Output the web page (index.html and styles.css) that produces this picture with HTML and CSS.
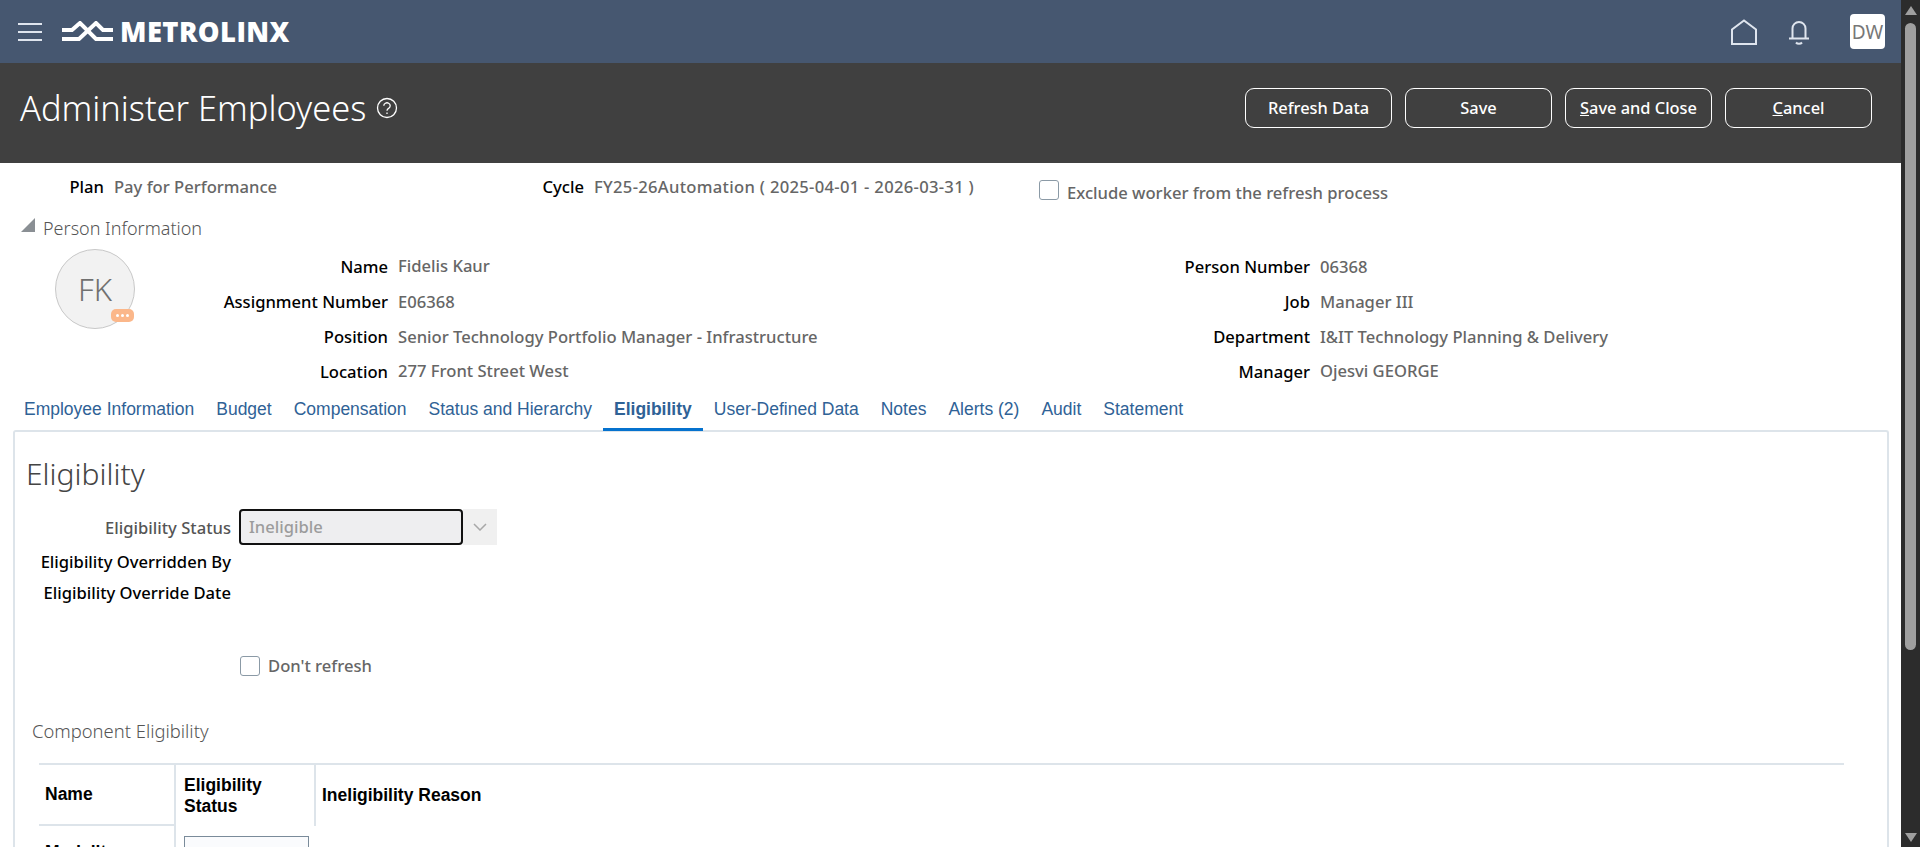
FILE: index.html
```html
<!DOCTYPE html>
<html lang="en">
<head>
	<meta charset="UTF-8">
	<title>Administer Employees</title>
	<link rel="stylesheet" href="styles.css">
</head>
<body>
<div class="app">
	<main class="page">
		<header class="topbar">
			<svg class="burger" width="24" height="18" viewBox="0 0 24 18"><path d="M0 1h24M0 9h24M0 17h24" stroke="#dfe5ee" stroke-width="2"/></svg>
			<svg class="mark" width="51" height="22" viewBox="0 0 51 22" fill="none" stroke="#fff" stroke-width="4"><path d="M0 9h10l8-7 16 16h17"/><path d="M51 9H41l-7-7-17 16H0"/></svg>
			<span class="brand">METROLINX</span>
			<div class="top-icons">
				<svg width="28" height="26" viewBox="0 0 28 26" fill="none" stroke="#dfe5ee" stroke-width="2"><path d="M2 25V10.500L14 1.500l12 9V25z"/></svg>
				<svg class="bell" width="22" height="26" viewBox="0 0 22 26" fill="none" stroke="#dfe5ee" stroke-width="2"><path d="M4.500 19V9.500a6.500 6.500 0 0 1 13 0V19M1 19.500h20"/><path d="M8 23.500a3.500 2.500 0 0 0 6 0"/></svg>
				<span class="user">DW</span>
			</div>
		</header>

		<section class="titlebar">
			<h1>Administer Employees</h1>
			<svg class="help" width="22" height="22" viewBox="0 0 22 22" fill="none" stroke="#fff" stroke-width="1.300"><circle cx="11" cy="11" r="9.500"/><path d="M7.800 8.800a3.200 3 0 1 1 4.800 2.600c-1 .6-1.600 1.100-1.600 2.400"/><path d="M11 15.500v1.500"/></svg>
			<div class="actions">
				<button type="button">Refresh Data</button>
				<button type="button">Save</button>
				<button type="button"><u>S</u>ave and Close</button>
				<button type="button"><u>C</u>ancel</button>
			</div>
		</section>

		<section class="plan">
			<span class="lbl">Plan</span><span class="val">Pay for Performance</span>
			<span class="lbl">Cycle</span><span class="val cycle">FY25-26Automation ( 2025-04-01 - 2026-03-31 )</span>
			<label class="check exclude"><i class="box"></i>Exclude worker from the refresh process</label>
		</section>

		<h2 class="person-head"><i class="tri"></i>Person Information</h2>

		<section class="person">
			<div class="avatar">FK<span class="badge"><b></b><b></b><b></b></span></div>
			<div class="facts">
				<span class="lbl">Name</span><span class="val up">Fidelis Kaur</span>
				<span class="lbl">Person Number</span><span class="val">06368</span>
				<span class="lbl">Assignment Number</span><span class="val">E06368</span>
				<span class="lbl">Job</span><span class="val">Manager III</span>
				<span class="lbl">Position</span><span class="val">Senior Technology Portfolio Manager - Infrastructure</span>
				<span class="lbl">Department</span><span class="val">I&amp;IT Technology Planning &amp; Delivery</span>
				<span class="lbl">Location</span><span class="val up">277 Front Street West</span>
				<span class="lbl">Manager</span><span class="val up">Ojesvi GEORGE</span>
			</div>
		</section>

		<nav class="tabs">
			<a>Employee Information</a>
			<a>Budget</a>
			<a>Compensation</a>
			<a>Status and Hierarchy</a>
			<a class="on">Eligibility</a>
			<a>User-Defined Data</a>
			<a>Notes</a>
			<a>Alerts (2)</a>
			<a>Audit</a>
			<a>Statement</a>
		</nav>

		<section class="panel">
			<h2 class="panel-title">Eligibility</h2>
			<div class="form">
				<span class="lbl soft">Eligibility Status</span>
				<div class="select"><span class="select-text">Ineligible</span><span class="select-btn"><svg width="14" height="8" viewBox="0 0 14 8" fill="none" stroke="#a8a8a8" stroke-width="1.500"><path d="M1 1l6 6 6-6"/></svg></span></div>
				<span class="lbl">Eligibility Overridden By</span><span></span>
				<span class="lbl">Eligibility Override Date</span><span></span>
			</div>
			<label class="check refresh"><i class="box"></i>Don't refresh</label>
			<h3 class="sub-title">Component Eligibility</h3>
			<div class="grid-table">
				<div class="th">Name</div>
				<div class="th second">Eligibility<br>Status</div>
				<div class="th last">Ineligibility Reason</div>
				<div class="td-name">Modality</div>
				<div class="td-status"><span class="input"></span></div>
			</div>
		</section>
	</main>

	<aside class="scrollbar">
		<i class="arrow"></i>
		<div class="track"><div class="thumb"></div></div>
		<i class="arrow down"></i>
	</aside>
</div>
</body>
</html>
```

FILE: styles.css
```css
*{
	box-sizing: border-box;
}
html, body{
	margin: 0;
	height: 100%;
	overflow: hidden;
	background: #fff;
}
body{
	font-family: "Noto Sans", "Open Sans", sans-serif;
	font-size: 16.600px;
	color: #000;
}
.app{
	display: flex;
	height: 847px;
}
.page{
	flex: 1;
	min-width: 0;
	overflow: hidden;
}

/* top bar */
.topbar{
	height: 63px;
	background: #465770;
	display: flex;
	align-items: center;
	padding-left: 18px;
}
.mark{
	margin-left: 20px;
}
.brand{
	margin-left: 7px;
	font-family: "Open Sans", sans-serif;
	font-weight: 800;
	font-size: 27.400px;
	line-height: 30px;
	letter-spacing: .4px;
	color: #fff;
}
.top-icons{
	margin-left: auto;
	margin-right: 16px;
	display: flex;
	align-items: center;
}
.bell{
	margin-left: 30px;
}
.user{
	margin-left: 40px;
	width: 35px;
	height: 35px;
	border-radius: 4px;
	background: #fff;
	color: #777;
	font-size: 19px;
	display: flex;
	align-items: center;
	justify-content: center;
}

/* title bar */
.titlebar{
	height: 100px;
	background: #404040;
	display: flex;
	align-items: flex-start;
	padding: 25px 29px 0 20px;
	color: #fff;
}
.titlebar h1{
	margin: 0;
	font-weight: 300;
	font-size: 34.400px;
	line-height: 40px;
}
.help{
	margin: 9px 0 0 10px;
}
.actions{
	margin-left: auto;
	display: flex;
	gap: 13px;
}
.actions button{
	width: 147px;
	height: 40px;
	background: transparent;
	border: 1px solid #fff;
	border-radius: 9px;
	color: #fff;
	font-family: inherit;
	font-size: 16.400px;
	font-weight: 500;
	padding: 0 0 2px;
}

/* plan line */
.lbl{
	color: #000;
	font-weight: 500;
	text-align: right;
	white-space: nowrap;
}
.val{
	color: #666;
	font-weight: 500;
	white-space: nowrap;
	padding-left: 10px;
}
.plan{
	height: 50px;
	display: grid;
	grid-template-columns: 104px 310px 170px 455px auto;
	align-items: baseline;
	padding-top: 11px;
}
.cycle{
	letter-spacing: .3px;
}
.check{
	display: flex;
	align-items: center;
	color: #666;
	font-weight: 500;
}
.box{
	width: 20px;
	height: 20px;
	border: 1px solid #8b9aa6;
	border-radius: 3px;
	background: #fff;
	margin-right: 8px;
}
.exclude{
	position: relative;
	top: 7px;
}
.exclude .box{
	margin-top: -6px;
}
.person-head{
	margin: 0;
	height: 28px;
	padding: 2px 0 0 21px;
	display: flex;
	align-items: center;
	font-weight: 300;
	font-size: 18px;
	color: #555;
}
.tri{
	width: 0;
	height: 0;
	border-left: 14px solid transparent;
	border-bottom: 14px solid #8a8f94;
	margin-right: 8px;
	margin-top: -6px;
}

/* person block */
.person{
	display: flex;
	height: 168px;
	padding: 8px 0 0 55px;
	position: relative;
}
.avatar{
	width: 80px;
	height: 80px;
	border: 1px solid #c8c8c8;
	border-radius: 50%;
	background: #f2f2f2;
	color: #707070;
	font-size: 31px;
	font-weight: 300;
	display: flex;
	align-items: center;
	justify-content: center;
	position: relative;
	flex: none;
}
.badge{
	position: absolute;
	left: 55px;
	top: 59px;
	width: 23px;
	height: 13px;
	border-radius: 5px;
	background: #fbb78a;
	display: flex;
	align-items: center;
	justify-content: center;
	gap: 2px;
}
.badge b{
	width: 3px;
	height: 3px;
	border-radius: 50%;
	background: #fff;
}
.facts{
	position: absolute;
	left: 0;
	top: 0;
	display: grid;
	grid-template-columns: 388px 569px 353px auto;
	grid-auto-rows: 35px;
	align-items: baseline;
	padding-top: 14px;
}
.facts .up{
	position: relative;
	top: -1px;
}

/* tabs */
.tabs{
	height: 42px;
	margin: -20px 0 0 13px;
	display: flex;
	font-family: "Liberation Sans", sans-serif;
	font-size: 17.500px;
	color: #2f6296;
}
.tabs a{
	padding: 0 11px;
	line-height: 40px;
	height: 42px;
	white-space: nowrap;
}
.tabs a.on{
	font-weight: bold;
	border-bottom: 3px solid #0572ce;
}

/* panel */
.panel{
	margin: -1px 12px 0 13px;
	height: 500px;
	border: 2px solid #dde4ea;
	border-bottom: 0;
	border-radius: 3px 3px 0 0;
	padding: 0 0 0 12px;
}
.panel-title{
	margin: 22px 0 0 -1px;
	font-weight: 300;
	font-size: 30px;
	line-height: 40px;
	color: #444;
}
.form{
	display: grid;
	grid-template-columns: 204px auto;
	justify-content: start;
	column-gap: 8px;
	margin-top: 15px;
	align-items: center;
}
.form .lbl{
	line-height: 31px;
}
.soft{
	color: #555;
}
.select{
	display: flex;
	width: 258px;
	height: 36px;
	margin-bottom: 1px;
}
.select-text{
	width: 224px;
	border: 2px solid #111;
	border-radius: 4px;
	background: #eeeef0;
	color: #9c9c9c;
	font-weight: 500;
	padding-left: 8px;
	line-height: 31px;
}
.select-btn{
	flex: 1;
	background: #f0f0f0;
	display: flex;
	align-items: center;
	justify-content: center;
}
.refresh{
	margin: 46px 0 0 213px;
}
.sub-title{
	margin: 41px 0 0 5px;
	font-weight: 300;
	font-size: 18.400px;
	line-height: 26px;
	color: #555;
}
.grid-table{
	display: grid;
	grid-template-columns: 137px 140px 1528px;
	grid-template-rows: 61px 40px;
	margin: 19px 0 0 12px;
	border-top: 2px solid #dde4ea;
	width: 1805px;
	font-family: "Liberation Sans", sans-serif;
	font-weight: bold;
	font-size: 17.500px;
}
.th{
	display: flex;
	align-items: center;
	padding-left: 6px;
	line-height: 21px;
	border-right: 2px solid #dde4ea;
}
.th:first-child{
	border-bottom: 2px solid #dde4ea;
}
.th.second{
	padding-left: 8px;
}
.th.last{
	border-right: 0;
}
.td-name{
	padding: 16px 0 0 6px;
	border-right: 2px solid #dde4ea;
}
.td-status{
	grid-column: 2 / 4;
	padding: 10px 0 0 8px;
}
.input{
	display: block;
	width: 125px;
	height: 40px;
	border: 1px solid #7a8b9a;
	background: #fafbfd;
}

/* scrollbar */
.scrollbar{
	width: 19px;
	background: #2c2c2c;
	display: flex;
	flex-direction: column;
	align-items: center;
	flex: none;
	padding: 6px 0 5px;
}
.arrow{
	width: 0;
	height: 0;
	border-left: 6px solid transparent;
	border-right: 6px solid transparent;
	border-bottom: 9px solid #9f9f9f;
}
.arrow.down{
	border-bottom: 0;
	border-top: 9px solid #9f9f9f;
}
.track{
	flex: 1;
	padding-top: 8px;
}
.thumb{
	width: 11px;
	height: 627px;
	border-radius: 6px;
	background: #9f9f9f;
}
```
